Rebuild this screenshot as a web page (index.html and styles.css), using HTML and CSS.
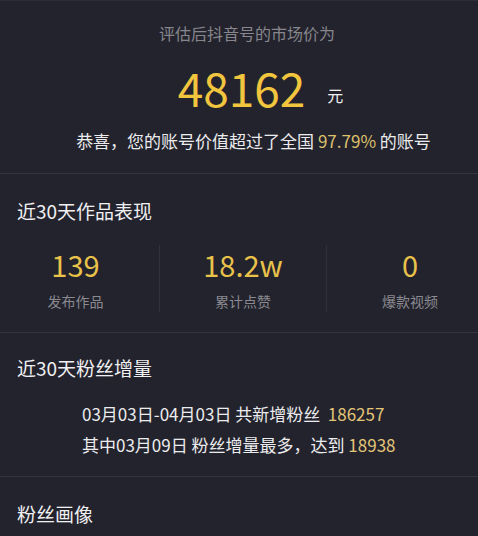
FILE: index.html
```html
<!DOCTYPE html>
<html>
<head>
  <title>抖音号估值</title>
  <meta name="viewport" content="width=device-width, initial-scale=1" />
  <link rel="stylesheet" href="styles.css">
</head>
<body>
  <div class="value">
    <div class="value-title">评估后抖音号的市场价为</div>
    <div class="price">
      <span class="price-num">48162</span>
      <span class="price-unit">元</span>
    </div>
    <div class="rank">恭喜，您的账号价值超过了全国 <span class="gold">97.79%</span> 的账号</div>
  </div>

  <div class="section">
    <h3>近30天作品表现</h3>
    <div class="stats">
      <div class="stat">
        <div class="stat-num">139</div>
        <div class="stat-label">发布作品</div>
      </div>
      <div class="stat">
        <div class="stat-num">18.2w</div>
        <div class="stat-label">累计点赞</div>
      </div>
      <div class="stat">
        <div class="stat-num">0</div>
        <div class="stat-label">爆款视频</div>
      </div>
    </div>
  </div>

  <div class="section fans">
    <h3>近30天粉丝增量</h3>
    <div class="fans-info">
      <p>03月03日-04月03日 共新增粉丝 &nbsp;<span class="gold">186257</span></p>
      <p>其中03月09日 粉丝增量最多，达到 <span class="gold">18938</span></p>
    </div>
  </div>

  <div class="section">
    <h3>粉丝画像</h3>
  </div>
</body>
</html>
```

FILE: styles.css
```css
html, body { overflow: hidden; }
body {
  margin: 0;
  background: #23232d;
  color: #ececee;
  font-family: "Noto Sans CJK SC", "Noto Sans", sans-serif;
}

.value { border-top: 1px solid #2d2d37; padding: 20px 0 20px; text-align: center; }
.value-title { font-size: 16px; line-height: 24px; color: #86868c; padding-left: 16px; }
.price { display: flex; justify-content: center; align-items: flex-end; gap: 22px; height: 56px; margin-top: 14px; padding-left: 43px; }
.price-num { font-size: 46px; line-height: 56px; color: #f2c53e; }
.price-unit { font-size: 16px; line-height: 16px; margin-bottom: 12px; color: #f0f0f0; }
.rank { font-size: 17px; line-height: 24px; margin-top: 14px; padding-left: 29px; }
.gold { color: #dcc06c; }

.section { border-top: 1px solid #34343e; padding: 24px 0 20px; }
.section h3 { margin: 0; padding-left: 17px; font-size: 19px; font-weight: normal; line-height: 26px; color: #f0f0f2; }

.stats { display: grid; grid-template-columns: repeat(3, 167px); margin: 21px 0 0 -8px; width: 501px; }
.stat { text-align: center; padding: 2px 0 1px; }
.stat + .stat { border-left: 1px solid #31313b; }
.stat-num { font-size: 29px; line-height: 34px; color: #e9c24a; }
.stat-label { font-size: 14px; line-height: 20px; margin-top: 10px; color: #8a8a90; }

.fans { padding: 22px 0 16px; }
.fans-info { padding-left: 82px; margin-top: 17px; }
.fans-info p { margin: 0; font-size: 17px; line-height: 31px; }
.fans-info .gold { color: #e3c577; }
```
